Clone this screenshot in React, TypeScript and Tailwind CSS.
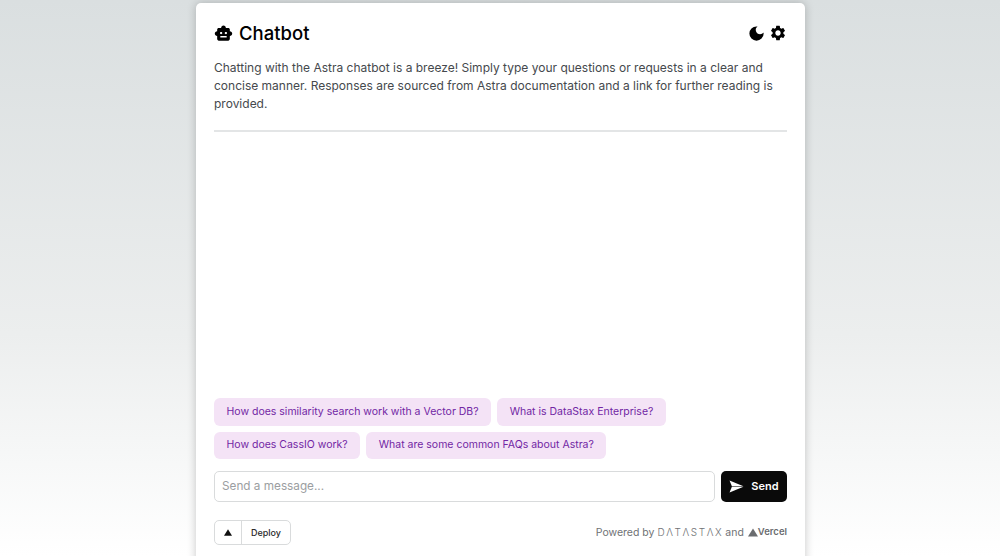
import { MdDarkMode, MdSettings, MdSmartToy } from 'react-icons/md';

const QUESTIONS = [
    ['How does similarity search work with a Vector DB?', 'What is DataStax Enterprise?'],
    ['How does CassIO work?', 'What are some common FAQs about Astra?'],
];

export default function App() {
    return (
        <div className="h-[556px] overflow-hidden pt-[3px] flex justify-center bg-gradient-to-b from-[#dadfe0] via-[#eceeee] via-60% to-white font-['Inter',sans-serif]">
            <div className="w-[609px] ml-px h-[600px] shrink-0 rounded-t-[5px] bg-white px-[18px] pt-[18px] shadow-[0_0_10px_rgba(0,0,0,0.22)]">
                {/* Header */}
                <div className="flex items-center justify-between h-[24px]">
                    <div className="flex items-center gap-[6px]">
                        <MdSmartToy className="w-[19px] h-[19px] text-black" />
                        <h1 className="text-[18.5px] leading-[24px] font-medium text-black">Chatbot</h1>
                    </div>
                    <div className="flex items-center gap-[3px]">
                        <MdDarkMode className="w-[19px] h-[19px] text-black" />
                        <MdSettings className="w-[18px] h-[18px] text-black" />
                    </div>
                </div>

                <p className="mt-[14px] text-[12px] leading-[18px] text-[#45494d]">
                    Chatting with the Astra chatbot is a breeze! Simply type your questions or requests in a clear and concise manner. Responses are sourced from Astra documentation and a link for further reading is provided.
                </p>
                <div className="mt-[17px] h-[2px] bg-[#e3e5e6]" />

                {/* Suggested questions */}
                <div className="mt-[266px] flex flex-col gap-[6px]">
                    {QUESTIONS.map((row) => (
                        <div key={row[0]} className="flex gap-[6px]">
                            {row.map((q) => (
                                <button key={q} className="h-[27.5px] px-[12.5px] rounded-[6px] bg-[#f4e3f6] text-[10.5px] text-[#7226a4]">
                                    {q}
                                </button>
                            ))}
                        </div>
                    ))}
                </div>

                {/* Input */}
                <div className="mt-[12px] flex gap-[6px]">
                    <div className="flex-1 h-[31px] flex items-center px-[7px] rounded-[5px] border border-[#d9dbdc] text-[11.75px] text-[#9b9ea1]">
                        Send a message...
                    </div>
                    <button className="w-[66px] h-[31px] flex items-center justify-center gap-[7px] rounded-[5px] bg-[#0a0a0a] text-white text-[11px] font-semibold">
                        <svg viewBox="0 0 16 14" className="w-[15px] h-[13px]" fill="white">
                            <path d="M0.5 0.5L15.5 6.6H3z" />
                            <path d="M0.5 13.5L15.5 7.4H3z" />
                        </svg>
                        Send
                    </button>
                </div>

                {/* Footer */}
                <div className="mt-[18px] flex items-center justify-between">
                    <div className="flex h-[25px] rounded-[5px] border border-[#d9dbdc] text-[9px] font-medium text-[#2b2b2b]">
                        <div className="w-[27px] flex items-center justify-center border-r border-[#d9dbdc]">
                            <svg viewBox="0 0 10 8" className="w-[8px] h-[7px]"><path d="M5 0l5 8H0z" fill="#111" /></svg>
                        </div>
                        <div className="w-[48px] flex items-center justify-center">Deploy</div>
                    </div>
                    <div className="flex items-center text-[10.5px] text-[#6f7275]">
                        <span>Powered by</span>
                        <span className="ml-[3px] text-[10px] font-light tracking-[1.6px] text-[#6f7275]">DΛTΛSTΛX</span>
                        <span className="ml-[2px]">and</span>
                        <svg viewBox="0 0 10 8" className="ml-[4px] w-[10px] h-[9px]"><path d="M5 0l5 8H0z" fill="#6a6c6f" /></svg>
                        <span className="text-[9.5px] font-semibold text-[#6a6c6f]">Vercel</span>
                    </div>
                </div>
            </div>
        </div>
    );
}
